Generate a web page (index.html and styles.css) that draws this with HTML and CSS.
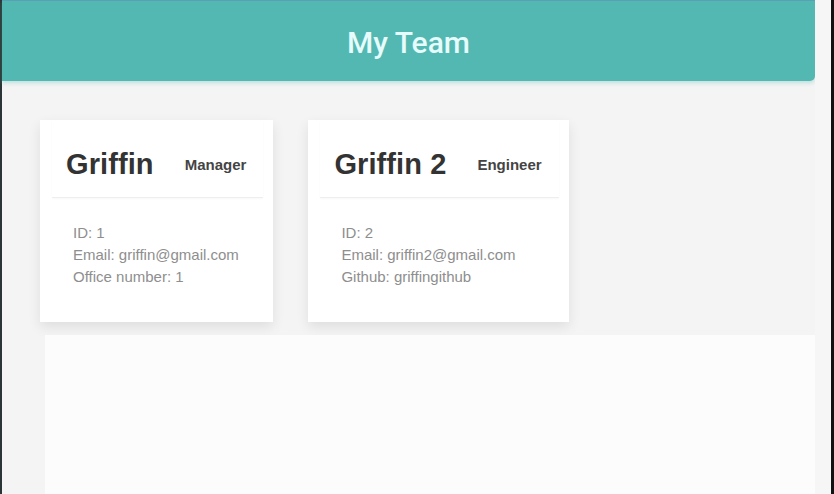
FILE: index.html
```html
<!DOCTYPE html>
<html>
<head>
<meta charset="utf-8">
<link rel="stylesheet" href="styles.css">
</head>
<body>
<div class="frame">
  <div class="main">
    <header class="top">My Team</header>
    <section class="cards">
      <div class="card">
        <div class="card-head">
          <h2 class="name">Griffin</h2>
          <span class="role">Manager</span>
        </div>
        <div class="card-body">
          <p>ID: 1</p>
          <p>Email: griffin@gmail.com</p>
          <p>Office number: 1</p>
        </div>
      </div>
      <div class="card">
        <div class="card-head">
          <h2 class="name">Griffin 2</h2>
          <span class="role">Engineer</span>
        </div>
        <div class="card-body">
          <p>ID: 2</p>
          <p>Email: griffin2@gmail.com</p>
          <p>Github: griffingithub</p>
        </div>
      </div>
    </section>
    <div class="panel"></div>
  </div>
  <div class="strip"></div>
</div>
</body>
</html>
```
FILE: styles.css
```css
html, body {
  margin: 0;
  padding: 0;
  height: 100%;
}
body {
  background: #f4f4f4;
  font-family: "Liberation Sans", Arial, sans-serif;
  overflow: hidden;
}
.frame {
  display: flex;
  height: 494px;
  border-left: 2px solid #2b3535;
  border-right: 3px solid #111;
  box-sizing: border-box;
}
.main {
  width: 813px;
  display: flex;
  flex-direction: column;
}
.strip {
  flex: 1;
  background: #f6f6f7;
}
.top {
  height: 81px;
  box-sizing: border-box;
  border-top: 1px solid #5a9fb5;
  background: #53b8b1;
  color: #e6fbfb;
  font-family: Roboto, sans-serif;
  font-weight: 500;
  font-size: 30px;
  display: flex;
  align-items: center;
  justify-content: center;
  padding-top: 2px;
  border-bottom-right-radius: 5px;
  box-shadow: 0 2px 4px rgba(83, 184, 177, 0.35);
}
.cards {
  display: flex;
  gap: 35px;
  padding: 39px 0 0 38px;
  align-items: flex-start;
}
.card {
  background: #fff;
  box-shadow: 0 5px 12px rgba(0, 0, 0, 0.09);
  height: 202px;
}
.card-head {
  display: flex;
  align-items: center;
  gap: 31px;
  margin: 0 10px 0 12px;
  padding: 0 17px 0 14px;
  height: 78px;
  box-sizing: border-box;
  padding-top: 11px;
  border-bottom: 1px solid #eee;
  box-shadow: 0 1px 2px rgba(0,0,0,0.03);
}
.name {
  margin: 0;
  font-size: 29px;
  font-weight: bold;
  color: #333;
  letter-spacing: 0.1px;
}
.role {
  font-size: 15px;
  font-weight: bold;
  color: #444;
}
.card-body {
  padding: 24px 33px 0;
}
.card-body p {
  margin: 0;
  font-size: 15px;
  line-height: 22px;
  color: #8e8e8e;
}
.panel {
  margin: 13px 0 0 43px;
  flex: 1;
  background: #fcfcfc;
}
```
